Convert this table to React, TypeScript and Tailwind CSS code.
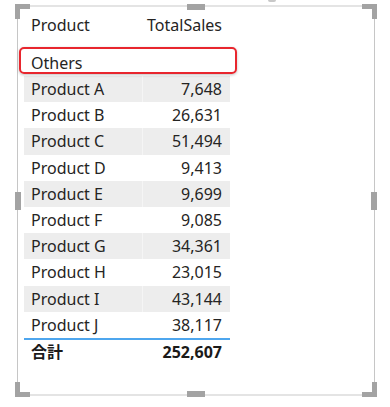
import React from "react";

const rows: [string, string][] = [
  ["Product A", "7,648"],
  ["Product B", "26,631"],
  ["Product C", "51,494"],
  ["Product D", "9,413"],
  ["Product E", "9,699"],
  ["Product F", "9,085"],
  ["Product G", "34,361"],
  ["Product H", "23,015"],
  ["Product I", "43,144"],
  ["Product J", "38,117"],
];

const font = { fontFamily: '"Noto Sans", "Noto Sans CJK JP", sans-serif' };

// L-shaped corner grip of the selection frame
function Corner({ className, h, v }: { className: string; h: string; v: string }) {
  return (
    <div className={`absolute w-[15px] h-[15px] ${className}`}>
      <div className={`absolute w-[15px] h-[5px] bg-[#a3a3a3] ${h}`} />
      <div className={`absolute w-[5px] h-[15px] bg-[#a3a3a3] ${v}`} />
    </div>
  );
}

export default function App() {
  return (
    <div className="relative w-[390px] h-[407px] bg-white overflow-hidden" style={font}>
      {/* stray shadow bit above the frame */}
      <div className="absolute left-[268px] top-0 w-[8px] h-[2px] rounded-b bg-[#c8c8c8]" />

      <div className="relative ml-[17px] mt-[5px] w-[358px] h-[391px] border-x border-x-[#c6c6c6] border-y-2 border-y-[#e4e4e4] pl-[6px] pt-[5px]">
        {/* selection handles */}
        <Corner className="-left-[3px] -top-[3px]" h="left-0 top-0" v="left-0 top-0" />
        <Corner className="-right-[3px] -top-[3px]" h="right-0 top-0" v="right-0 top-0" />
        <Corner className="-left-[3px] -bottom-[3px]" h="left-0 bottom-0" v="left-0 bottom-0" />
        <Corner className="-right-[3px] -bottom-[3px]" h="right-0 bottom-0" v="right-0 bottom-0" />
        <div className="absolute left-[169px] -top-[3px] w-[18px] h-[6px] bg-[#a3a3a3]" />
        <div className="absolute left-[169px] -bottom-[3px] w-[18px] h-[6px] bg-[#a3a3a3]" />
        <div className="absolute -left-[3px] top-[185px] w-[6px] h-[18px] bg-[#a3a3a3]" />
        <div className="absolute -right-[3px] top-[185px] w-[6px] h-[18px] bg-[#a3a3a3]" />

        <div className="flex flex-col w-[206px] text-[16px] text-[#252423] leading-none">
          {/* header */}
          <div className="flex h-[26px] items-center mb-[12px]">
            <div className="w-[119px] pl-[7px]">Product</div>
            <div className="flex-1 pr-[8px] text-right">TotalSales</div>
          </div>

          {/* Others group row with highlight */}
          <div className="relative flex h-[26px] items-center">
            <div className="w-[119px] pl-[7px]">Others</div>
            <div className="flex-1" />
            <div className="absolute -left-[5px] -top-[3px] w-[218px] h-[27px] rounded-[5px] border-2 border-[#e8262e] shadow-[0_1px_3px_rgba(0,0,0,0.25)]" />
          </div>

          {rows.map(([name, value], i) => (
            <div
              key={name}
              className={`flex h-[26.2px] items-center ${i % 2 === 0 ? "bg-[#ededed]" : "bg-white"}`}
            >
              <div
                className={`w-[119px] h-full flex items-center pl-[7px] border-r ${
                  i % 2 === 0 ? "border-r-[#f5f5f5]" : "border-r-white"
                }`}
              >
                {name}
              </div>
              <div className="flex-1 pr-[8px] text-right">{value}</div>
            </div>
          ))}

          {/* total row */}
          <div className="flex h-[26px] items-center border-t-2 border-t-[#4ea6ee] font-bold text-[#1b1a19]">
            <div className="w-[119px] pl-[7px]">合計</div>
            <div className="flex-1 pr-[8px] text-right">252,607</div>
          </div>
        </div>
      </div>
    </div>
  );
}
